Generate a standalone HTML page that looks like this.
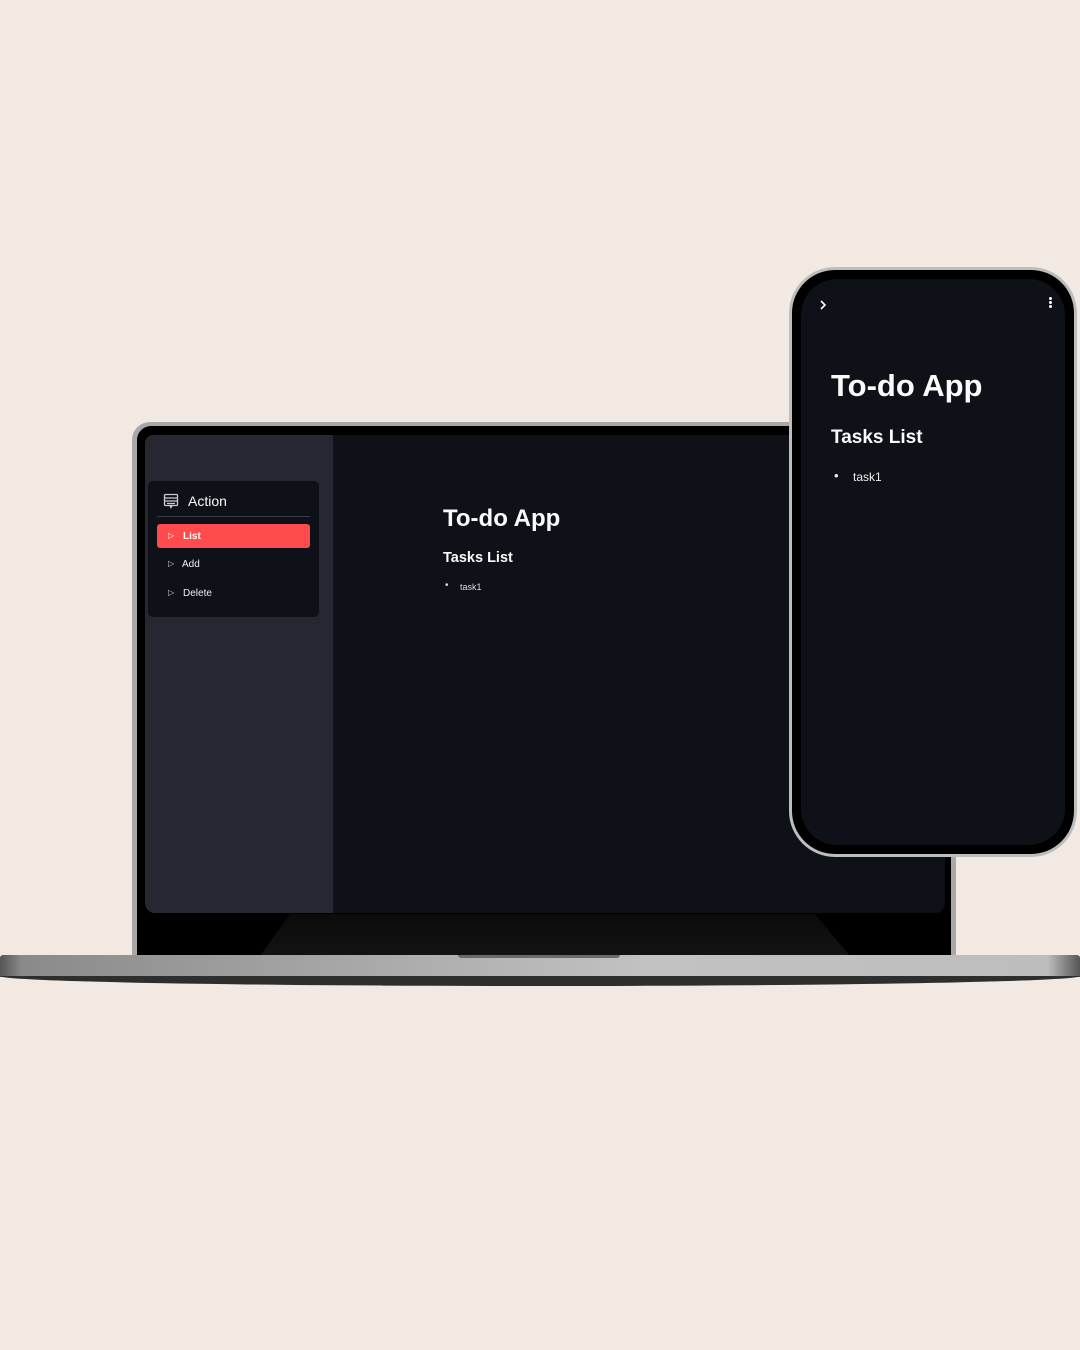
<!DOCTYPE html>
<html><head><style>
body{margin:0;width:1080px;height:1350px;background:#f2e9e3;position:relative;overflow:hidden;font-family:"Liberation Sans",sans-serif}
.a{position:absolute}
.sb{font-family:"Liberation Sans",sans-serif;font-weight:bold;color:#fafafa}
</style></head><body>
<!-- laptop lid -->
<div class="a" style="left:132px;top:422px;width:824px;height:540px;background:#a8a8a8;border-radius:18px 18px 0 0"></div>
<div class="a" style="left:137px;top:426px;width:814px;height:534px;background:#000;border-radius:14px 14px 0 0"></div>
<div class="a" style="left:145px;top:435px;width:800px;height:478px;background:#0e1117;border-radius:8px 8px 10px 10px;overflow:hidden">
  <div class="a" style="left:0;top:0;width:188px;height:478px;background:#262730"></div>
  <div class="a" style="left:3px;top:46px;width:171px;height:136px;background:#0e1117;border-radius:5px"></div>
  <svg class="a" style="left:18px;top:58px" width="16" height="16" viewBox="0 0 16 16" fill="none" stroke="#ccc" stroke-width="1.3"><rect x="1.5" y="1.5" width="13" height="11" rx="1"/><path d="M1.5 5h13M1.5 8h13M4 10.5h8M7 12.5l1 2 1-2"/></svg>
  <div class="a" style="left:43px;top:58px;color:#fafafa;font-size:14px">Action</div>
  <div class="a" style="left:12px;top:81px;width:153px;height:1px;background:#3a3b44"></div>
  <div class="a" style="left:12px;top:89px;width:153px;height:24px;background:#ff4b4b;border-radius:3px"></div>
  <div class="a" style="left:23px;top:96px;color:#fff;font-size:8px">▷</div>
  <div class="a" style="left:38px;top:96px;color:#fff;font-size:10px;font-weight:bold">List</div>
  <div class="a" style="left:23px;top:124px;color:#ddd;font-size:8px">▷</div>
  <div class="a" style="left:37px;top:124px;color:#eee;font-size:10px">Add</div>
  <div class="a" style="left:23px;top:153px;color:#ddd;font-size:8px">▷</div>
  <div class="a" style="left:38px;top:153px;color:#eee;font-size:10px">Delete</div>
  <div class="a sb" style="left:298px;top:70px;font-size:24px">To-do App</div>
  <div class="a sb" style="left:298px;top:115px;font-size:14.5px">Tasks List</div>
  <div class="a" style="left:300px;top:145px;color:#ddd;font-size:10px">•</div>
  <div class="a" style="left:315px;top:147px;color:#ddd;font-size:9px">task1</div>
</div>
<div class="a" style="left:260px;top:914px;width:590px;height:42px;background:linear-gradient(#0c0c0c,#151515);clip-path:polygon(30px 0,555px 0,590px 42px,0 42px);opacity:.9"></div>
<!-- base -->
<div class="a" style="left:0;top:955px;width:1080px;height:22px;background:linear-gradient(90deg,#555 0,#8a8a8a 2%,#a5a5a5 30%,#c2c2c2 60%,#bdbdbd 97%,#555 100%);border-radius:3px 3px 0 0"></div>
<div class="a" style="left:0;top:976px;width:1080px;height:10px;background:#2e2e2e;border-radius:0 0 50% 50%/0 0 100% 100%"></div>
<div class="a" style="left:458px;top:955px;width:162px;height:3px;background:#6a6a6a;border-radius:0 0 4px 4px"></div>
<!-- phone -->
<div class="a" style="left:789px;top:267px;width:288px;height:590px;background:#bdbdbd;border-radius:46px"></div>
<div class="a" style="left:792px;top:270px;width:282px;height:584px;background:#000;border-radius:43px"></div>
<div class="a" style="left:801px;top:279px;width:264px;height:566px;background:#0e1117;border-radius:36px">
  <svg class="a" style="left:18px;top:21px" width="8" height="10" viewBox="0 0 8 10" fill="none" stroke="#fff" stroke-width="1.6"><path d="M2 1l4 4-4 4"/></svg>
  <div class="a" style="left:248px;top:18px;width:3px">
    <div style="width:3px;height:3px;background:#fff;border-radius:50%;margin-bottom:1px"></div>
    <div style="width:3px;height:3px;background:#fff;border-radius:50%;margin-bottom:1px"></div>
    <div style="width:3px;height:3px;background:#fff;border-radius:50%"></div>
  </div>
  <div class="a sb" style="left:30px;top:89px;font-size:31px">To-do App</div>
  <div class="a sb" style="left:30px;top:148px;font-size:19px">Tasks List</div>
  <div class="a" style="left:33px;top:189px;color:#eee;font-size:13px">•</div>
  <div class="a" style="left:52px;top:191px;color:#eee;font-size:12px">task1</div>
</div>
</body></html>
